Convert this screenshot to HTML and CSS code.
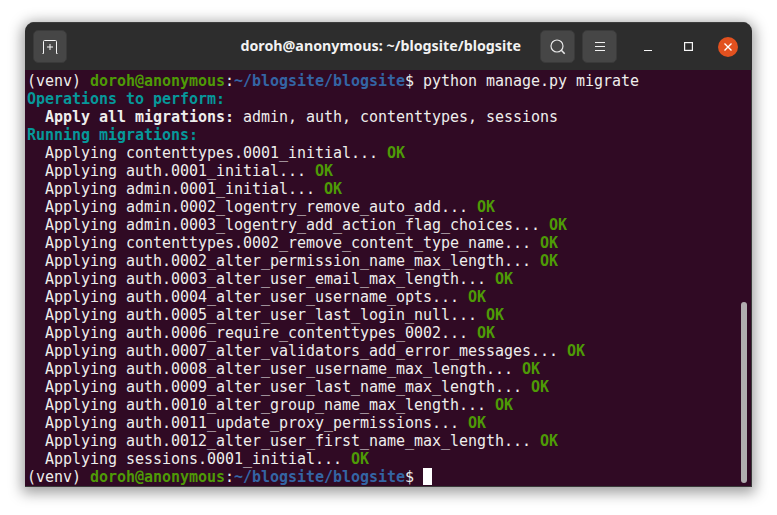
FILE: index.html
```html
<!DOCTYPE html>
<html lang="en">
<head>
<meta charset="utf-8">
<title>Terminal</title>
<link rel="stylesheet" href="styles.css">
</head>
<body>
<main class="window">
  <header class="titlebar">
    <div class="btn btn-new">
      <svg width="16" height="14" viewBox="0 0 16 14" fill="none" stroke="#f4f4f4" stroke-width="1"><path d="M.5 13.5H1.5V1.5a1 1 0 0 1 1-1h11a1 1 0 0 1 1 1v12h1"/><path d="M8 4v6M5 7h6"/></svg>
    </div>
    <h1 class="title">doroh@anonymous: ~/blogsite/blogsite</h1>
    <div class="btn">
      <svg width="16" height="16" viewBox="0 0 16 16" fill="none" stroke="#e8e8e8" stroke-width="1.2"><circle cx="7" cy="7" r="6"/><path d="M11.3 11.3l3.4 3.4" stroke-width="1.6"/></svg>
    </div>
    <div class="btn">
      <svg width="12" height="10" viewBox="0 0 12 10" fill="none" stroke="#f0f0f0" stroke-width="1"><path d="M1 .5h10M1 4.5h10M1 8.5h10"/></svg>
    </div>
    <div class="winctl winctl-first">
      <svg width="10" height="10" viewBox="0 0 10 10" fill="none" stroke="#f6f6f6" stroke-width="1"><path d="M1 8.5h8"/></svg>
    </div>
    <div class="winctl">
      <svg width="9" height="9" viewBox="0 0 9 9" fill="none" stroke="#f6f6f6" stroke-width="1.2"><rect x=".6" y=".6" width="7.8" height="7.8"/></svg>
    </div>
    <div class="winctl">
      <div class="close">
        <svg width="10" height="10" viewBox="0 0 10 10" fill="none" stroke="#fff" stroke-width="1.4"><path d="M1.5 1.5l7 7M8.5 1.5l-7 7"/></svg>
      </div>
    </div>
  </header>
  <section class="term">
    <pre class="output">(venv) <b class="g">doroh@anonymous</b>:<b class="b">~/blogsite/blogsite</b>$ python manage.py migrate
<b class="c">Operations to perform:</b>
<b>  Apply all migrations:</b> admin, auth, contenttypes, sessions
<b class="c">Running migrations:</b>
  Applying contenttypes.0001_initial... <b class="g">OK</b>
  Applying auth.0001_initial... <b class="g">OK</b>
  Applying admin.0001_initial... <b class="g">OK</b>
  Applying admin.0002_logentry_remove_auto_add... <b class="g">OK</b>
  Applying admin.0003_logentry_add_action_flag_choices... <b class="g">OK</b>
  Applying contenttypes.0002_remove_content_type_name... <b class="g">OK</b>
  Applying auth.0002_alter_permission_name_max_length... <b class="g">OK</b>
  Applying auth.0003_alter_user_email_max_length... <b class="g">OK</b>
  Applying auth.0004_alter_user_username_opts... <b class="g">OK</b>
  Applying auth.0005_alter_user_last_login_null... <b class="g">OK</b>
  Applying auth.0006_require_contenttypes_0002... <b class="g">OK</b>
  Applying auth.0007_alter_validators_add_error_messages... <b class="g">OK</b>
  Applying auth.0008_alter_user_username_max_length... <b class="g">OK</b>
  Applying auth.0009_alter_user_last_name_max_length... <b class="g">OK</b>
  Applying auth.0010_alter_group_name_max_length... <b class="g">OK</b>
  Applying auth.0011_update_proxy_permissions... <b class="g">OK</b>
  Applying auth.0012_alter_user_first_name_max_length... <b class="g">OK</b>
  Applying sessions.0001_initial... <b class="g">OK</b>
(venv) <b class="g">doroh@anonymous</b>:<b class="b">~/blogsite/blogsite</b>$ <span class="cursor"></span></pre>
    <div class="scrollbar"></div>
  </section>
</main>
</body>
</html>
```
FILE: styles.css
```css
* { box-sizing: border-box; }
html, body { margin: 0; height: 100%; background: #fff; overflow: hidden; }
body { padding: 22px 25px 28px; }

.window {
  width: 727px;
  height: 465px;
  display: flex;
  flex-direction: column;
  border-radius: 9px 9px 0 0;
  overflow: hidden;
  box-shadow: 0 3px 14px 3px rgba(0,0,0,.38);
}

.titlebar {
  height: 48px;
  flex: none;
  display: flex;
  align-items: center;
  padding: 0 4px 0 7.7px;
  background: #2d2d2d;
  border-top: 1px solid #3d3d3d;
}
.btn {
  width: 34.6px;
  height: 33px;
  margin-left: 7.4px;
  display: flex;
  align-items: center;
  justify-content: center;
  background: #464646;
  border: 1px solid #3a3a3a;
  border-radius: 5px;
}
.btn-new { margin-left: 0; }
.title {
  flex: 1;
  margin: 0;
  padding-left: 161px;
  text-align: center;
  font: 700 14.25px/1 "Noto Sans", "Open Sans", sans-serif;
  color: #f2f2f2;
}
.winctl {
  width: 40px;
  height: 32px;
  display: flex;
  align-items: center;
  justify-content: center;
}
.winctl-first { margin-left: 11px; }
.close {
  width: 20px;
  height: 20px;
  display: flex;
  align-items: center;
  justify-content: center;
  border-radius: 50%;
  background: #e2511f;
}

.term {
  position: relative;
  flex: 1;
  padding: 2px 0 0 2px;
  background: #300a24;
  border-right: 1px solid #3a3a3a;
  border-bottom: 1px solid #3a3a3a;
}
.output {
  margin: 0;
  font: 400 15px/18px "DejaVu Sans Mono", monospace;
  letter-spacing: -0.03px;
  color: #eeeeec;
}
.output b { font-weight: 700; }
.g { color: #4e9a06; }
.b { color: #3465a4; }
.c { color: #06989a; }
.cursor {
  display: inline-block;
  width: 9px;
  height: 17px;
  vertical-align: -3px;
  background: #fff;
}
.scrollbar {
  position: absolute;
  right: 4px;
  top: 232px;
  width: 6px;
  height: 181px;
  border-radius: 3px;
  background: #b0adaf;
}
```
